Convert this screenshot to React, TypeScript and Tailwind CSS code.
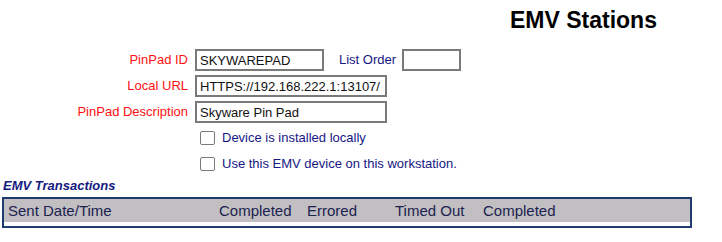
import React from 'react'

const labelCls = 'text-right text-[13px] leading-[22px] text-[#ff1010] whitespace-nowrap'
const inputCls = 'h-[22px] border-2 border-[#7a7a7a] bg-white px-[3px] text-[13px] text-[#111] outline-none'

function CheckRow({ label }: { label: string }) {
  return (
    <label className="flex h-[26px] items-center pl-[200px]">
      <input
        type="checkbox"
        className="h-[14px] w-[15px] appearance-none rounded-[2px] border border-[#7a7a7a] bg-white"
      />
      <span className="ml-[7px] text-[13px] text-[#161684]">{label}</span>
    </label>
  )
}

export default function App() {
  const columns = ['Sent Date/Time', 'Completed', 'Errored', 'Timed Out', 'Completed']

  return (
    <div
      className="h-[242px] w-[722px] overflow-hidden bg-white"
      style={{ fontFamily: '"Liberation Sans", Arial, sans-serif' }}
    >
      {/* Title */}
      <div className="pt-[7px] pl-[510px] text-[23px] font-bold leading-[26px] text-black">
        EMV Stations
      </div>

      {/* Station form */}
      <div className="mt-[16px] flex flex-col gap-[4px]">
        <div className="flex items-center">
          <div className={`w-[188px] ${labelCls}`}>PinPad ID</div>
          <input className={`ml-[7px] w-[129px] ${inputCls}`} defaultValue="SKYWAREPAD" />
          <span className="ml-[15px] text-[13px] text-[#161684]">List Order</span>
          <input className={`ml-[6px] w-[59px] ${inputCls}`} defaultValue="" />
        </div>
        <div className="flex items-center">
          <div className={`w-[188px] ${labelCls}`}>Local URL</div>
          <input className={`ml-[7px] w-[192px] ${inputCls}`} defaultValue="HTTPS://192.168.222.1:13107/" />
        </div>
        <div className="flex items-center">
          <div className={`w-[188px] ${labelCls}`}>PinPad Description</div>
          <input className={`ml-[7px] w-[192px] ${inputCls}`} defaultValue="Skyware Pin Pad" />
        </div>
      </div>

      <div className="mt-[2px]">
        <CheckRow label="Device is installed locally" />
        <CheckRow label="Use this EMV device on this workstation." />
      </div>

      {/* Transactions */}
      <div className="pl-[3px] text-[13px] font-bold italic leading-[17px] text-[#141a80]">
        EMV Transactions
      </div>
      <div className="mt-[3px] ml-[2px] w-[690px] border-2 border-[#1f3b70] bg-white">
        <div className="grid h-[23px] grid-cols-[211px_88px_88px_88px_1fr] items-center bg-[#c1bfc1] pl-[4px] text-[15px] leading-[23px] text-[#1c2250]">
          {columns.map((c, i) => (
            <div key={i} className="whitespace-nowrap">{c}</div>
          ))}
        </div>
        <div className="h-[4px]" />
      </div>
    </div>
  )
}
